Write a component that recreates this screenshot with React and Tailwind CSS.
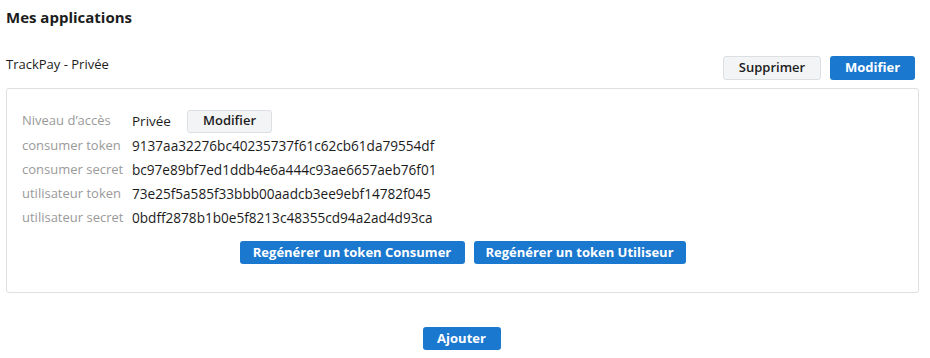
export default function App() {
  const rows = [
    ['consumer token', '9137aa32276bc40235737f61c62cb61da79554df'],
    ['consumer secret', 'bc97e89bf7ed1ddb4e6a444c93ae6657aeb76f01'],
    ['utilisateur token', '73e25f5a585f33bbb00aadcb3ee9ebf14782f045'],
    ['utilisateur secret', '0bdff2878b1b0e5f8213c48355cd94a2ad4d93ca'],
  ];

  return (
    <div className="w-[930px] h-[358px] bg-white text-[#1c1c1c] font-['Open_Sans',sans-serif] px-[6px] pt-[6px]">
      <h1 className="text-[15px] font-bold leading-[22px]">Mes applications</h1>

      <div className="flex items-start justify-between mt-[27px] pr-[9px]">
        <div className="text-[13px] leading-[18px]">TrackPay - Privée</div>
        <div className="flex gap-[9px] mt-[1px]">
          <button className="h-[24px] w-[98px] rounded-[3px] border border-[#dcdfe3] bg-[#f3f4f6] text-[13px] font-semibold">Supprimer</button>
          <button className="h-[24px] w-[85px] rounded-[3px] bg-[#1b78cf] text-white text-[13px] font-bold">Modifier</button>
        </div>
      </div>

      <div className="mt-[8px] mr-[5px] h-[205px] rounded-[3px] border border-[#e0e0e0] px-[15px] pt-[20px]">
        <div className="flex items-center h-[24px] text-[13px]">
          <span className="w-[110px] text-[#9a9a9a]">Niveau d’accès</span>
          <span className="w-[55px] text-[13.5px]">Privée</span>
          <button className="h-[23px] w-[85px] rounded-[3px] border border-[#dcdfe3] bg-[#f3f4f6] text-[13px] font-semibold">Modifier</button>
        </div>
        {rows.map(([k, v]) => (
          <div key={k} className="flex items-center h-[24px] text-[13px] pt-[2px]">
            <span className="w-[110px] text-[#9a9a9a]">{k}</span>
            <span className="text-[13.6px]">{v}</span>
          </div>
        ))}
        <div className="flex justify-center gap-[9px] mt-[12px]">
          <button className="h-[23px] w-[225px] rounded-[3px] bg-[#1b78cf] text-white text-[13px] font-bold">Regénérer un token Consumer</button>
          <button className="h-[23px] w-[212px] rounded-[3px] bg-[#1b78cf] text-white text-[13px] font-bold">Regénérer un token Utiliseur</button>
        </div>
      </div>

      <div className="flex justify-center mt-[34px] pr-[7px]">
        <button className="h-[23px] w-[78px] rounded-[3px] bg-[#1b78cf] text-white text-[13px] font-bold">Ajouter</button>
      </div>
    </div>
  );
}
